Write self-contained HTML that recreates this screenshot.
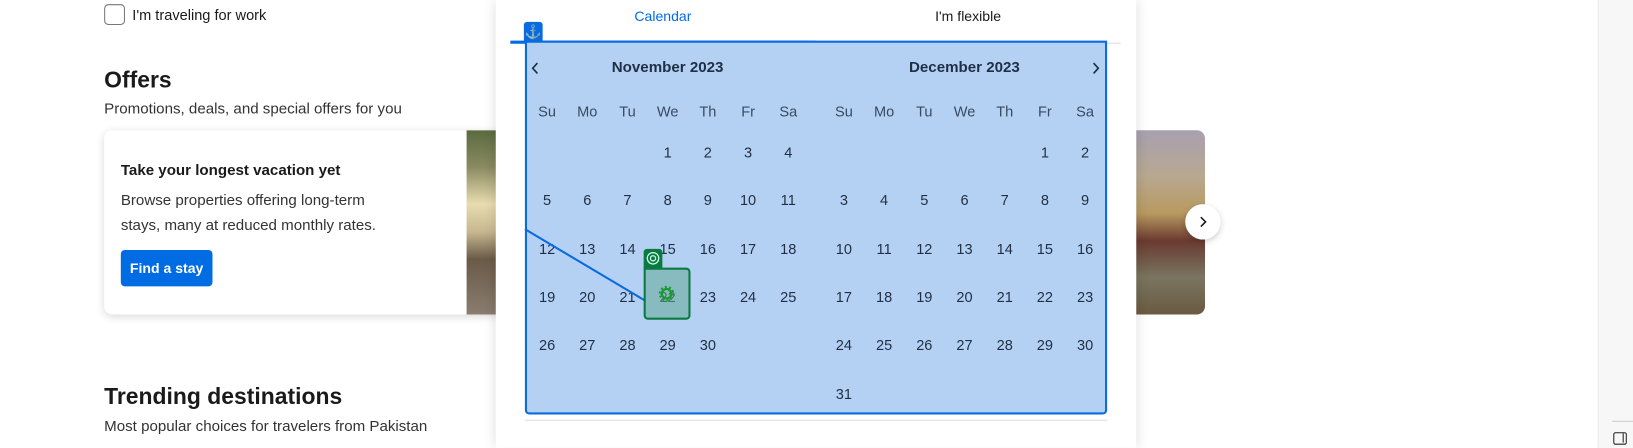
<!DOCTYPE html>
<html><head><meta charset="utf-8"><style>
*{box-sizing:border-box;margin:0;padding:0}
body{width:1633px;height:435px;overflow:hidden;background:#fff;font-family:"Liberation Sans",sans-serif;position:relative;color:#1a1a1a}
#w{position:absolute;left:0;top:0;width:1568px;height:418px;transform:scale(1.0415);transform-origin:0 0}
.a{position:absolute}
.cal{position:absolute;width:270px;border-collapse:collapse;table-layout:fixed;color:#1f2f45;font-size:14px}
.cal td{width:38.6px;text-align:center;height:46.3px;padding:0}
.cal tr.h td{height:32px;color:#3a4a60}
</style></head><body><div id="w">
<div class="a" style="left:1534px;top:0;width:40px;height:430px;background:#f7f7f7;border-left:1px solid #ececec"></div>
<div class="a" style="left:1548px;top:404px;width:25px;height:1px;background:#ccc"></div>
<div class="a" style="left:1549px;top:415px;width:13px;height:12px;border:1.5px solid #222;border-radius:2px"><div style="position:absolute;right:2px;top:0;width:1.5px;height:9px;background:#222"></div></div>

<div class="a" style="left:100px;top:4px;width:20px;height:20px;border:1px solid #777;border-radius:4px"></div>
<div class="a" style="left:127px;top:6px;font-size:14px;color:#1a1a1a">I'm traveling for work</div>
<div class="a" style="left:100px;top:64px;font-size:22px;font-weight:bold">Offers</div>
<div class="a" style="left:100px;top:97px;font-size:14.5px;color:#333">Promotions, deals, and special offers for you</div>
<div class="a" style="left:100px;top:125px;width:400px;height:177px;background:#fff;border-radius:8px;box-shadow:0 2px 8px rgba(0,0,0,.15);overflow:hidden">
 <div class="a" style="left:348px;top:0;width:60px;height:177px;background:linear-gradient(180deg,#5a6a40 0%,#8a8a60 20%,#e8dcb0 40%,#c8b890 55%,#6a5a48 70%,#8a7d70 100%)"></div>
</div>
<div class="a" style="left:116px;top:156px;font-size:14.5px;font-weight:bold">Take your longest vacation yet</div>
<div class="a" style="left:116px;top:181px;font-size:14.5px;color:#333;line-height:24px">Browse properties offering long-term<br>stays, many at reduced monthly rates.</div>
<div class="a" style="left:116px;top:240px;width:88px;height:35px;background:#006ce4;border-radius:4px;color:#fff;font-size:13.5px;font-weight:bold;text-align:center;line-height:35px">Find a stay</div>
<div class="a" style="left:100px;top:368px;font-size:22px;font-weight:bold">Trending destinations</div>
<div class="a" style="left:100px;top:402px;font-size:14.5px;color:#333">Most popular choices for travelers from Pakistan</div>

<div class="a" style="left:1080px;top:125px;width:77px;height:177px;border-radius:0 8px 8px 0;background:linear-gradient(180deg,#a8a0b0 0%,#b8a890 25%,#b89a60 45%,#6a3a30 60%,#7a7560 80%,#6a5a40 100%)"></div>
<div class="a" style="left:1138px;top:196px;width:34px;height:34px;border-radius:50%;background:#fff;box-shadow:0 2px 6px rgba(0,0,0,.2)"></div>
<svg class="a" style="left:1150px;top:207px" width="10" height="12"><path d="M3 1.5 L7.5 6 L3 10.5" fill="none" stroke="#1a1a1a" stroke-width="1.5"/></svg>

<div class="a" style="left:476px;top:0;width:615px;height:430px;background:#fff;box-shadow:0 0 12px rgba(0,0,0,.15)"></div>
<div class="a" style="left:490px;top:8px;width:293px;text-align:center;font-size:13.5px;color:#006ce4">Calendar</div>
<div class="a" style="left:783px;top:8px;width:293px;text-align:center;font-size:13.5px;color:#1a1a1a">I'm flexible</div>
<div class="a" style="left:490px;top:41px;width:586px;height:1px;background:#ddd"></div>
<div class="a" style="left:490px;top:39px;width:293px;height:3px;background:#006ce4"></div>
<div class="a" style="left:504px;top:403px;width:559px;height:1px;background:#ddd"></div>

<div class="a" style="left:504px;top:39px;width:559px;height:359px;border:2px solid #0a6ae0;border-radius:0 0 4px 4px;background:#b4d1f4"></div>
<div class="a" style="left:503px;top:21px;width:18px;height:19px;background:#0a6ae0;border-radius:3px 3px 0 0;color:#fff;font-size:13px;text-align:center;line-height:19px">⚓</div>
<svg class="a" style="left:509px;top:59px" width="10" height="14"><path d="M7 1.5 L2.5 6.5 L7 11.5" fill="none" stroke="#1f2f45" stroke-width="1.6"/></svg>
<svg class="a" style="left:1047px;top:59px" width="10" height="14"><path d="M3 1.5 L7.5 6.5 L3 11.5" fill="none" stroke="#1f2f45" stroke-width="1.6"/></svg>
<div class="a" style="left:506px;top:57px;width:270px;text-align:center;font-size:14.5px;font-weight:bold;color:#1f2f45">November 2023</div>
<div class="a" style="left:791px;top:57px;width:270px;text-align:center;font-size:14.5px;font-weight:bold;color:#1f2f45">December 2023</div>

<table class="cal" style="left:506px;top:91px">
<tr class="h"><td>Su</td><td>Mo</td><td>Tu</td><td>We</td><td>Th</td><td>Fr</td><td>Sa</td></tr>
<tr><td></td><td></td><td></td><td>1</td><td>2</td><td>3</td><td>4</td></tr>
<tr><td>5</td><td>6</td><td>7</td><td>8</td><td>9</td><td>10</td><td>11</td></tr>
<tr><td>12</td><td>13</td><td>14</td><td>15</td><td>16</td><td>17</td><td>18</td></tr>
<tr><td>19</td><td>20</td><td>21</td><td>22</td><td>23</td><td>24</td><td>25</td></tr>
<tr><td>26</td><td>27</td><td>28</td><td>29</td><td>30</td><td></td><td></td></tr>
</table>
<table class="cal" style="left:791px;top:91px">
<tr class="h"><td>Su</td><td>Mo</td><td>Tu</td><td>We</td><td>Th</td><td>Fr</td><td>Sa</td></tr>
<tr><td></td><td></td><td></td><td></td><td></td><td>1</td><td>2</td></tr>
<tr><td>3</td><td>4</td><td>5</td><td>6</td><td>7</td><td>8</td><td>9</td></tr>
<tr><td>10</td><td>11</td><td>12</td><td>13</td><td>14</td><td>15</td><td>16</td></tr>
<tr><td>17</td><td>18</td><td>19</td><td>20</td><td>21</td><td>22</td><td>23</td></tr>
<tr><td>24</td><td>25</td><td>26</td><td>27</td><td>28</td><td>29</td><td>30</td></tr>
<tr><td>31</td><td></td><td></td><td></td><td></td><td></td><td></td></tr>
</table>

<svg class="a" style="left:0;top:0" width="1568" height="418"><line x1="504" y1="220" x2="620" y2="289" stroke="#0a6ae0" stroke-width="2"/></svg>
<div class="a" style="left:618px;top:257px;width:45px;height:50px;background:rgba(100,170,150,.55);border:2px solid #0a7a40;border-radius:0 4px 4px 4px"></div>
<div class="a" style="left:618px;top:239px;width:18px;height:19px;background:#0a7a40;border-radius:3px 3px 0 0"></div>
<svg class="a" style="left:620px;top:241px" width="14" height="14"><circle cx="7" cy="7" r="5.5" fill="none" stroke="#cfe" stroke-width="1.2"/><circle cx="7" cy="7" r="2.5" fill="none" stroke="#cfe" stroke-width="1.2"/></svg>
<svg class="a" style="left:632px;top:274px" width="16" height="16"><circle cx="8" cy="8" r="4.5" fill="none" stroke="#1a9a30" stroke-width="2.2"/><circle cx="8" cy="8" r="6.5" fill="none" stroke="#1a9a30" stroke-width="2" stroke-dasharray="2 2.1"/></svg>
</div></body></html>
